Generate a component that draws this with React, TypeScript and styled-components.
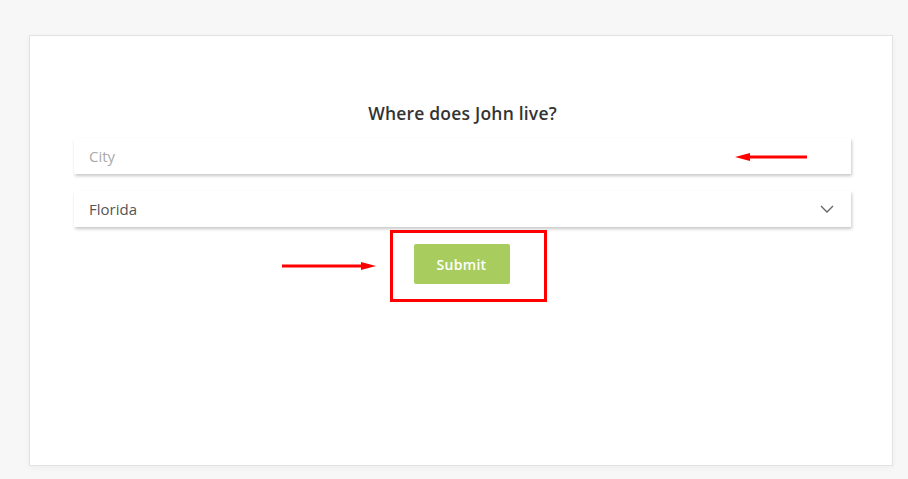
import { FC } from "react";
import styled, { createGlobalStyle } from "styled-components";

const GlobalStyle = createGlobalStyle`
  html, body {
    margin: 0;
    padding: 0;
    background: #f7f7f7;
    font-family: "Open Sans", "Noto Sans", sans-serif;
  }
`;

const RedArrow: FC<{ direction: "left" | "right"; width: number }> = ({
  direction,
  width,
}) => (
  <svg width={width} height={10} viewBox={`0 0 ${width} 10`}>
    {direction === "left" ? (
      <>
        <line x1={12} y1={5} x2={width} y2={5} stroke="#f00" strokeWidth={3} />
        <polygon points="0,5 15,1 15,9" fill="#f00" />
      </>
    ) : (
      <>
        <line x1={0} y1={5} x2={width - 12} y2={5} stroke="#f00" strokeWidth={3} />
        <polygon points={`${width},5 ${width - 15},1 ${width - 15},9`} fill="#f00" />
      </>
    )}
  </svg>
);

const Chevron = () => (
  <svg width={14} height={8} viewBox="0 0 14 8">
    <polyline
      points="1,1 7,7 13,1"
      fill="none"
      stroke="#666"
      strokeWidth={1.4}
    />
  </svg>
);

const App: FC = () => (
  <>
    <GlobalStyle />
    <Page>
      <Card>
        <Question>Where does John live?</Question>
        <Field>
          <CityInput placeholder="City" />
          <CityArrow>
            <RedArrow direction="left" width={72} />
          </CityArrow>
        </Field>
        <Field>
          <Select>
            <span>Florida</span>
            <Chevron />
          </Select>
        </Field>
        <SubmitRow>
          <Highlight>
            <SubmitArrow>
              <RedArrow direction="right" width={94} />
            </SubmitArrow>
            <SubmitButton>Submit</SubmitButton>
          </Highlight>
        </SubmitRow>
      </Card>
    </Page>
  </>
);

export default App;

const Page = styled.div`
  padding: 35px 15px 13px 29px;
  height: 479px;
  box-sizing: border-box;
`;

const Card = styled.div`
  width: 864px;
  height: 431px;
  box-sizing: border-box;
  background: #fff;
  border: 1px solid #e2e2e2;
  box-shadow: 0 2px 6px rgba(0, 0, 0, 0.04);
  padding: 66px 41px 0 44px;
  display: flex;
  flex-direction: column;
`;

const Question = styled.h2`
  margin: 0 0 14px;
  text-align: center;
  font-size: 17.5px;
  font-weight: 600;
  color: #333;
  line-height: 22px;
  letter-spacing: 0.2px;
`;

const Field = styled.div`
  position: relative;
  height: 36px;
  margin-bottom: 17px;
  background: #fff;
  box-shadow: 1px 2px 3px rgba(0, 0, 0, 0.22);
`;

const CityInput = styled.input`
  width: 100%;
  height: 100%;
  box-sizing: border-box;
  border: none;
  outline: none;
  padding: 0 15px;
  font-family: inherit;
  font-size: 15px;
  color: #555;
  background: transparent;

  &::placeholder {
    color: #aaa;
  }
`;

const CityArrow = styled.div`
  position: absolute;
  left: 661px;
  top: 14px;
  line-height: 0;
`;

const Select = styled.div`
  height: 100%;
  padding: 0 17px 0 15px;
  display: flex;
  align-items: center;
  justify-content: space-between;
  font-size: 15px;
  color: #555;
`;

const SubmitRow = styled.div`
  display: flex;
  justify-content: center;
  margin-top: -14px;
  padding-left: 11px;
`;

const Highlight = styled.div`
  position: relative;
  border: 3px solid #f00;
  padding: 11px 34px 15px 21px;
`;

const SubmitArrow = styled.div`
  position: absolute;
  left: -111px;
  top: 28px;
  line-height: 0;
`;

const SubmitButton = styled.button`
  display: block;
  width: 96px;
  height: 40px;
  border: none;
  border-radius: 2px;
  background: #a8cd5e;
  color: #fff;
  font-family: inherit;
  font-size: 14px;
  font-weight: 600;
  letter-spacing: 0.3px;
  cursor: pointer;
`;
